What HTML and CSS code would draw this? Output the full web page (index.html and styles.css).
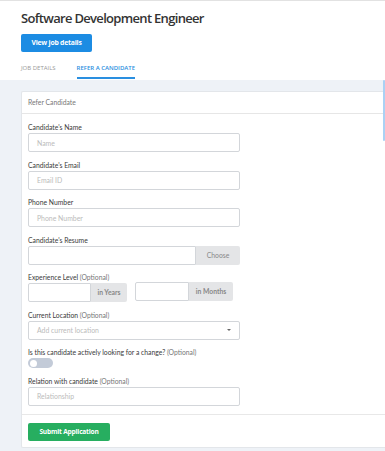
FILE: index.html
```html
<!DOCTYPE html>
<html lang="en">
<head>
    <meta charset="UTF-8">
    <title>Refer a candidate</title>
    <link rel="stylesheet" href="styles.css">
</head>
<body>
<div class="top">
    <h1 class="job-title">Software Development Engineer</h1>
    <div class="btn btn-blue">View job details</div>
    <ul class="tabs">
        <li>JOB DETAILS</li>
        <li class="active">REFER A CANDIDATE</li>
    </ul>
</div>
<div class="main">
    <div class="card">
        <div class="card-head">Refer Candidate</div>
        <div class="card-body">
            <div class="field">
                <label>Candidate's Name</label>
                <div class="input"><span class="ph">Name</span></div>
            </div>
            <div class="field">
                <label>Candidate's Email</label>
                <div class="input"><span class="ph">Email ID</span></div>
            </div>
            <div class="field">
                <label>Phone Number</label>
                <div class="input"><span class="ph">Phone Number</span></div>
            </div>
            <div class="field">
                <label>Candidate's Resume</label>
                <div class="group wide">
                    <div class="input"></div>
                    <div class="addon choose">Choose</div>
                </div>
            </div>
            <div class="field">
                <label>Experience Level <span class="opt">(Optional)</span></label>
                <div class="exp">
                    <div class="group years">
                        <div class="input"></div>
                        <div class="addon">in Years</div>
                    </div>
                    <div class="group months">
                        <div class="input"></div>
                        <div class="addon">in Months</div>
                    </div>
                </div>
            </div>
            <div class="field">
                <label>Current Location <span class="opt">(Optional)</span></label>
                <div class="input select"><span class="ph">Add current location</span><span class="caret"></span></div>
            </div>
            <div class="field">
                <label>Is this candidate actively looking for a change? <span class="opt">(Optional)</span></label>
                <div class="toggle"><span class="knob"></span></div>
            </div>
            <div class="field last">
                <label>Relation with candidate <span class="opt">(Optional)</span></label>
                <div class="input"><span class="ph">Relationship</span></div>
            </div>
        </div>
        <div class="card-foot">
            <div class="btn btn-green">Submit Application</div>
        </div>
    </div>
    <div class="scroll-thumb"></div>
</div>
</body>
</html>
```

FILE: styles.css
```css
*{
    padding: 0;
    margin: 0;
    box-sizing: border-box;
    list-style: none;
}
html,body{
    height: 100%;
    overflow: hidden;
}
body{
    font-family: "Lato", "Open Sans", sans-serif;
    color: #333;
    background: #fff;
    display: flex;
    flex-direction: column;
}
.top{
    border-top: 1px solid #e2e2e2;
    padding: 7px 21px 0;
}
.job-title{
    font-family: "Open Sans", sans-serif;
    font-weight: 600;
    font-size: 13px;
    line-height: 20px;
    color: #333;
    letter-spacing: -0.68px;
}
.btn{
    display: block;
    font-family: "Open Sans", sans-serif;
    font-weight: 700;
    color: #fff;
    border-radius: 2px;
    text-align: center;
    letter-spacing: -0.2px;
}
.btn-blue{
    margin-top: 6px;
    width: 71px;
    height: 18px;
    line-height: 18px;
    font-size: 6.8px;
    background: #1c8ce3;
}
.tabs{
    display: flex;
    gap: 21px;
    margin-top: 11px;
}
.tabs li{
    font-family: "Open Sans", sans-serif;
    font-size: 6px;
    line-height: 10px;
    color: #999;
    padding-bottom: 4px;
    border-bottom: 2px solid transparent;
}
.tabs li.active{
    color: #2a8fe0;
    font-weight: 600;
    border-bottom-color: #2a8fe0;
}
.main{
    position: relative;
    flex-grow: 1;
    background: #eef2f7;
    padding: 11px 0 0 21px;
    margin-top: 1px;
}
.card{
    background: #fff;
    border: 1px solid #e3e6ea;
    border-right: none;
    border-radius: 2px 0 0 2px;
}
.card-head{
    height: 22px;
    line-height: 21px;
    padding-left: 6px;
    font-size: 6.8px;
    color: #777;
    border-bottom: 1px solid #e6e6e6;
}
.card-body{
    padding: 8px 6px 8px;
    border-bottom: 1px solid #e8e8e8;
}
.field{
    margin-bottom: 7.5px;
}
.field.last{
    margin-bottom: 0;
}
.field label{
    display: block;
    font-size: 6.8px;
    line-height: 10px;
    color: #3a3a3a;
    margin-bottom: 1px;
}
.field label .opt{
    color: #777;
}
.input{
    width: 212px;
    height: 19px;
    border: 1px solid #d3d6da;
    border-radius: 2px;
    padding-left: 8px;
    display: flex;
    align-items: center;
    background: #fff;
}
.ph{
    font-size: 6.9px;
    color: #bbb;
}
.select{
    justify-content: space-between;
    padding-right: 8px;
}
.caret{
    border-left: 2px solid transparent;
    border-right: 2px solid transparent;
    border-top: 2px solid #666;
}
.group{
    display: flex;
}
.group .input{
    border-radius: 2px 0 0 2px;
}
.addon{
    height: 19px;
    line-height: 19px;
    background: #e4e5e7;
    color: #888;
    font-size: 6.8px;
    text-align: center;
    border-radius: 0 2px 2px 0;
}
.wide .input{
    width: 168px;
}
.choose{
    width: 44px;
}
.exp{
    display: flex;
    gap: 8px;
}
.years .input{
    width: 63px;
}
.years .addon{
    width: 36px;
    font-weight: 700;
}
.months{
    margin-top: -1px;
}
.months .input{
    width: 54px;
}
.months .addon{
    width: 44px;
    font-weight: 700;
}
.toggle{
    width: 25px;
    height: 10px;
    border-radius: 5px;
    background: #c3cbd8;
    padding: 1.5px;
}
.knob{
    display: block;
    width: 7px;
    height: 7px;
    border-radius: 50%;
    background: #fff;
}
.card-foot{
    padding: 8px 6px 6px;
}
.btn-green{
    width: 82px;
    height: 18px;
    line-height: 18px;
    font-size: 6.6px;
    background: #27ae60;
}
.scroll-thumb{
    position: absolute;
    right: 0;
    top: 0;
    width: 2px;
    height: 61px;
    background: #aad1f4;
    border-radius: 1px;
}
```
